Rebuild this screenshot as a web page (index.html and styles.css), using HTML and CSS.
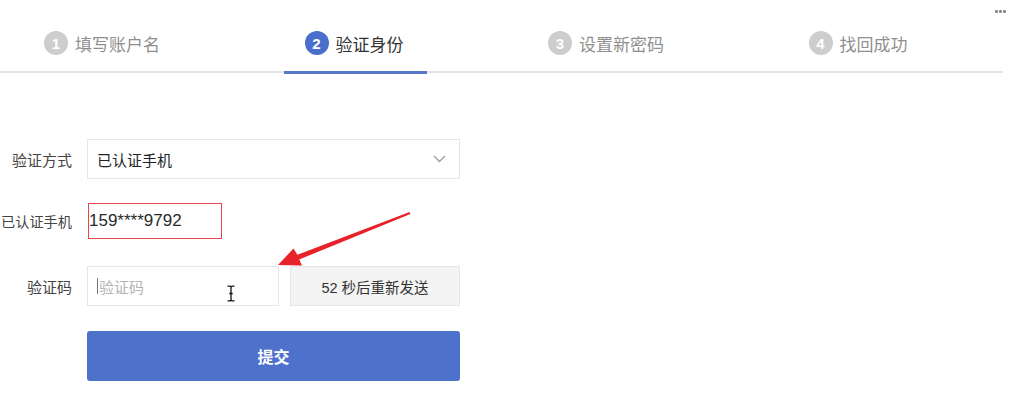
FILE: index.html
```html
<!DOCTYPE html>
<html lang="zh-CN">
<head>
<meta charset="utf-8">
<title>找回密码 - 验证身份</title>
<link rel="stylesheet" href="styles.css">
</head>
<body>
<div class="page">
  <div class="dots"><i></i><i></i><i></i></div>
  <div class="steps-wrap">
    <div class="steps">
      <div class="step"><span class="num">1</span><span class="label">填写账户名</span></div>
      <div class="step active"><span class="num">2</span><span class="label">验证身份</span></div>
      <div class="step"><span class="num">3</span><span class="label">设置新密码</span></div>
      <div class="step"><span class="num">4</span><span class="label">找回成功</span></div>
    </div>
  </div>

  <div class="form">
    <div class="row row-method">
      <div class="lbl">验证方式</div>
      <div class="select">
        <span>已认证手机</span>
        <svg class="chev" width="13" height="8" viewBox="0 0 13 8"><path d="M1 1l5.5 5.5L12 1" fill="none" stroke="#a0a0a0" stroke-width="1.4"/></svg>
      </div>
    </div>
    <div class="row row-phone">
      <div class="lbl lbl-long">已认证手机</div>
      <div class="phone">159****9792</div>
    </div>
    <div class="row row-code">
      <div class="lbl">验证码</div>
      <div class="code-input"><span class="caret"></span><span class="ph">验证码</span>
        <svg class="ibeam" width="10" height="17" viewBox="0 0 10 17"><path d="M1.5 1.2h2.2c.8 0 1.3.5 1.3 1.2 0-.7.5-1.2 1.3-1.2h2.2M5 2.4v12.2M1.5 15.8h2.2c.8 0 1.3-.5 1.3-1.2 0 .7.5 1.2 1.3 1.2h2.2M3.3 8.5h3.4" fill="none" stroke="#111" stroke-width="1.3"/></svg>
      </div>
      <div class="resend">52 秒后重新发送</div>
    </div>
    <div class="row row-submit">
      <div class="lbl"></div>
      <div class="submit">提交</div>
    </div>
  </div>

  <svg class="arrow" width="1009" height="403" viewBox="0 0 1009 403">
    <polygon points="278,265 302,265.5 299.2,259.5 410.4,213.9 409.6,212.1 297.4,254.8 293.5,248.5" fill="#e8222a"/>
  </svg>
</div>
</body>
</html>
```
FILE: styles.css
```css
html, body {
  margin: 0;
  padding: 0;
  background: #fff;
}
body {
  width: 1009px;
  height: 403px;
  overflow: hidden;
  font-family: "Liberation Sans", "Noto Sans CJK SC", sans-serif;
  color: #333;
}
.page {
  position: relative;
  width: 1009px;
  height: 403px;
}
.dots {
  position: absolute;
  top: 10px;
  left: 995px;
  display: flex;
  gap: 1px;
}
.dots i {
  display: block;
  width: 3px;
  height: 3px;
  background: #888;
  border-radius: 1px;
}
.steps-wrap {
  width: 1003px;
  padding-top: 15px;
  border-bottom: 2px solid #e4e4e4;
}
.steps {
  display: flex;
  margin-left: -24px;
}
.step {
  position: relative;
  width: 252px;
  height: 56px;
  display: flex;
  align-items: center;
  justify-content: center;
  gap: 7px;
  color: #8f8f8f;
  font-size: 17px;
}
.step .num {
  width: 24px;
  height: 24px;
  border-radius: 50%;
  background: #cdcdcd;
  color: #fff;
  font-size: 15px;
  font-weight: bold;
  display: flex;
  align-items: center;
  justify-content: center;
}
.step.active {
  color: #333;
}
.step.active .num {
  background: #4a6ecb;
}
.step.active::after {
  content: "";
  position: absolute;
  left: 56px;
  bottom: -3px;
  width: 143px;
  height: 3px;
  background: #5676cc;
}
.form {
  padding-top: 66px;
  display: flex;
  flex-direction: column;
}
.row {
  display: flex;
  align-items: center;
}
.lbl {
  width: 72px;
  flex: none;
  margin-right: 15px;
  text-align: right;
  white-space: nowrap;
  font-size: 15px;
  color: #444;
}
.lbl-long {
  font-size: 14.2px;
}
.row-method { height: 40px; }
.row-phone { height: 36px; margin-top: 24px; }
.row-code { height: 40px; margin-top: 27px; }
.row-submit { height: 50px; margin-top: 25px; }
.select {
  width: 373px;
  height: 40px;
  box-sizing: border-box;
  border: 1px solid #e6e6e6;
  display: flex;
  align-items: center;
  justify-content: space-between;
  padding: 0 13px 0 9px;
  font-size: 15px;
  color: #222;
}
.phone {
  margin-left: 1px;
  width: 134px;
  height: 36px;
  box-sizing: border-box;
  border: 1px solid #e8434a;
  display: flex;
  align-items: center;
  padding-left: 0;
  font-size: 17px;
  color: #2a2a2a;
}
.code-input {
  position: relative;
  width: 192px;
  height: 40px;
  box-sizing: border-box;
  border: 1px solid #e6e6e6;
  display: flex;
  align-items: center;
  padding-left: 9px;
  font-size: 15px;
  color: #b4b4b4;
}
.caret {
  width: 1px;
  height: 16px;
  background: #777;
  margin-right: 1px;
}
.ibeam {
  position: absolute;
  left: 138px;
  top: 18px;
}
.resend {
  margin-left: 11px;
  width: 170px;
  height: 40px;
  box-sizing: border-box;
  border: 1px solid #e6e6e6;
  background: #f4f4f4;
  display: flex;
  align-items: center;
  justify-content: center;
  font-size: 14.5px;
  color: #333;
}
.submit {
  width: 373px;
  height: 50px;
  border-radius: 3px;
  background: #4e71cb;
  color: #fff;
  font-size: 16px;
  font-weight: bold;
  display: flex;
  align-items: center;
  justify-content: center;
}
.arrow {
  position: absolute;
  left: 0;
  top: 0;
  pointer-events: none;
}
```
